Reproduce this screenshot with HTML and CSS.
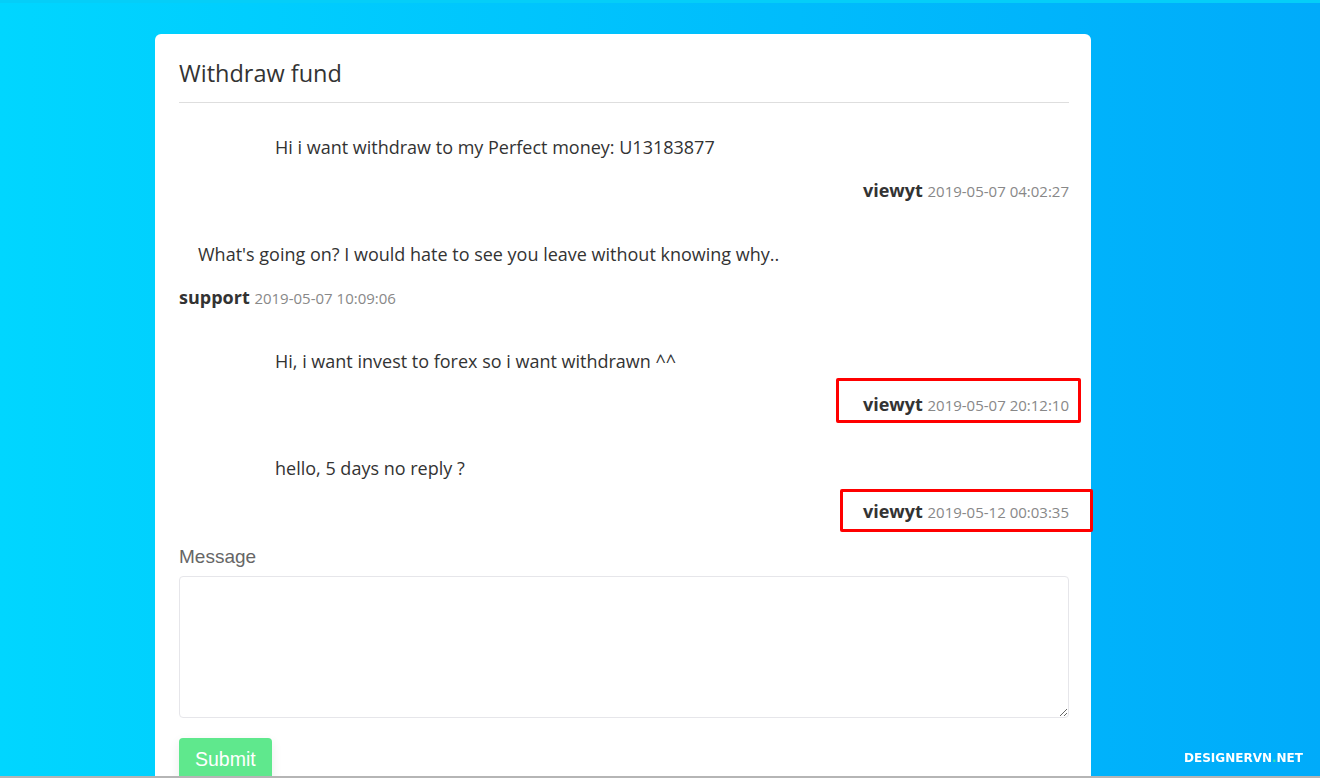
FILE: index.html
```html
<!DOCTYPE html>
<html lang="en">
<head>
  <meta charset="UTF-8" />
  <meta name="viewport" content="width=device-width, initial-scale=1.0"/>
  <title>Withdraw fund - Ticket</title>
  <link rel="stylesheet" href="styles.css">
</head>
<body>

<div class="ticket-card">
  <h2 class="ticket-title">Withdraw fund</h2>

  <div class="thread">
    <div class="msg msg-user">
      <p class="msg-text">Hi i want withdraw to my Perfect money: U13183877</p>
      <div class="msg-meta"><b>viewyt</b> <span class="msg-date">2019-05-07 04:02:27</span></div>
    </div>

    <div class="msg msg-support">
      <p class="msg-text">What's going on? I would hate to see you leave without knowing why..</p>
      <div class="msg-meta"><b>support</b> <span class="msg-date">2019-05-07 10:09:06</span></div>
    </div>

    <div class="msg msg-user">
      <p class="msg-text">Hi, i want invest to forex so i want withdrawn ^^</p>
      <div class="msg-meta marked mark-a"><b>viewyt</b> <span class="msg-date">2019-05-07 20:12:10</span></div>
    </div>

    <div class="msg msg-user">
      <p class="msg-text">hello, 5 days no reply ?</p>
      <div class="msg-meta marked mark-b"><b>viewyt</b> <span class="msg-date">2019-05-12 00:03:35</span></div>
    </div>
  </div>

  <form class="reply-form">
    <label for="message">Message</label>
    <textarea id="message"></textarea>
    <button type="submit">Submit</button>
  </form>
</div>

<div class="watermark">DESIGNERVN<span>.</span>NET</div>

</body>
</html>
```

FILE: styles.css
```css
:root {
  --bg-left: #00d6ff;
  --bg-right: #00abfa;
  --text: #333;
  --muted: #888;
  --line: #dedede;
  --green: #5fe88d;
  --mark: #f00;
}

* {
  box-sizing: border-box;
}

html, body {
  height: 100%;
}

body {
  margin: 0;
  overflow: hidden;
  background: linear-gradient(90deg, var(--bg-left), var(--bg-right));
  border-top: 3px solid #05cef8;
  border-bottom: 2px solid #b5b5b5;
  font-family: 'Open Sans', sans-serif;
  color: var(--text);
}

.ticket-card {
  width: 936px;
  margin: 31px 0 0 155px;
  background: #fff;
  border-radius: 6px;
  padding: 24px 22px 40px 24px;
}

.ticket-title {
  margin: 0;
  font-size: 23.5px;
  font-weight: 400;
  line-height: 30px;
  padding-bottom: 14px;
  border-bottom: 1px solid var(--line);
}

.thread {
  padding-top: 31px;
  display: flex;
  flex-direction: column;
  gap: 37px;
}

.msg-text {
  margin: 0 0 17px;
  font-size: 18px;
  line-height: 26px;
}

.msg-user .msg-text {
  padding-left: 96px;
}

.msg-support .msg-text {
  padding-left: 19px;
}

.msg-meta {
  font-size: 18px;
  line-height: 26px;
}

.msg-user .msg-meta {
  text-align: right;
}

.msg-meta b {
  font-weight: 700;
}

.msg-date {
  font-size: 15px;
  color: var(--muted);
}

/* red outline around flagged replies */
.marked {
  position: relative;
}

.marked::after {
  content: "";
  position: absolute;
  border: 3px solid var(--mark);
  border-radius: 2px;
}

.mark-a::after {
  left: 657px;
  right: -12px;
  top: -13px;
  bottom: -5px;
}

.mark-b::after {
  left: 661px;
  right: -24px;
  top: -9px;
  bottom: -7px;
}

.reply-form {
  margin-top: 20px;
  display: flex;
  flex-direction: column;
  align-items: flex-start;
}

.reply-form label {
  font-family: 'Liberation Sans', Arial, sans-serif;
  font-size: 19px;
  line-height: 24px;
  color: #666;
}

.reply-form textarea {
  margin-top: 7px;
  width: 890px;
  height: 142px;
  border: 1px solid #e6e6ea;
  border-radius: 4px;
  resize: vertical;
}

.reply-form button {
  margin-top: 20px;
  padding: 10px 16px 14px;
  border: none;
  border-radius: 4px;
  background: var(--green);
  color: #fff;
  font-family: 'Liberation Sans', Arial, sans-serif;
  font-size: 19.5px;
  box-shadow: 0 4px 12px rgba(0, 0, 0, 0.08);
}

.watermark {
  position: fixed;
  right: 17px;
  bottom: 13px;
  font-family: 'DejaVu Sans', sans-serif;
  font-weight: bold;
  font-size: 12px;
  color: #fff;
}

.watermark span {
  color: #2ee6b0;
}
```
